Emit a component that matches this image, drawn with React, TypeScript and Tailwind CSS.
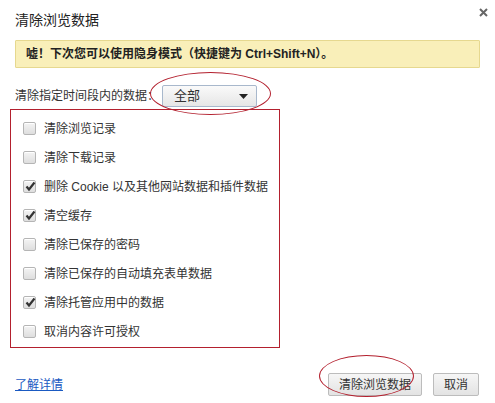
import React from "react";

const items: { label: string; checked: boolean }[] = [
  { label: "清除浏览记录", checked: false },
  { label: "清除下载记录", checked: false },
  { label: "删除 Cookie 以及其他网站数据和插件数据", checked: true },
  { label: "清空缓存", checked: true },
  { label: "清除已保存的密码", checked: false },
  { label: "清除已保存的自动填充表单数据", checked: false },
  { label: "清除托管应用中的数据", checked: true },
  { label: "取消内容许可授权", checked: false },
];

const Checkbox = ({ checked }: { checked: boolean }) => (
  <span className="relative flex h-[13px] w-[13px] shrink-0 items-center justify-center rounded-[2px] border border-[#b5b5b5] bg-gradient-to-b from-[#f4f4f4] to-[#dedede] shadow-[inset_0_1px_0_#fff]">
    {checked && (
      <svg width="11" height="11" viewBox="0 0 11 11" className="absolute left-[1px] top-[0px]">
        <path d="M1.5 5.5 L4 8.5 L9.5 1.5" fill="none" stroke="#333" strokeWidth="2.2" />
      </svg>
    )}
  </span>
);

export default function App() {
  return (
    <div
      className="relative h-[403px] w-[495px] overflow-hidden bg-white text-[12px] text-[#333]"
      style={{ fontFamily: '"Liberation Sans", Arial, "Noto Sans CJK SC", sans-serif' }}
    >
      <div className="absolute right-[7px] top-[8px]">
        <svg width="9" height="9" viewBox="0 0 9 9">
          <path d="M1 1 L8 8 M8 1 L1 8" stroke="#666" strokeWidth="2" />
        </svg>
      </div>

      <div className="px-[15px] pt-[10px]">
        <h1 className="h-[20px] text-[14px] leading-[20px] text-[#222]">清除浏览数据</h1>

        <div className="mt-[10px] flex h-[28px] items-center rounded-[1px] border border-[#e6d88f] bg-[#f9efb9] pl-[10px] font-bold text-[#222]">
          嘘！下次您可以使用隐身模式（快捷键为 Ctrl+Shift+N）。
        </div>

        <div className="mt-[17px] flex h-[22px] items-center">
          <span className="whitespace-nowrap">清除指定时间段内的数据：</span>
          <div className="ml-[3px] flex h-[22px] w-[95px] items-center justify-between rounded-[2px] border border-[#a8b8cc] bg-gradient-to-b from-[#fafafa] to-[#e6e6e6] pl-[11px] pr-[8px] text-[13px]">
            <span>全部</span>
            <svg width="9" height="5" viewBox="0 0 9 5">
              <path d="M0 0 H9 L4.5 5 Z" fill="#222" />
            </svg>
          </div>
        </div>
      </div>

      <div className="ml-[10px] mt-[2px] w-[270px] border border-[#b3202e] pb-[1px] pt-[4px]">
        {items.map((it) => (
          <div key={it.label} className="flex h-[29px] items-center whitespace-nowrap pl-[12px]">
            <Checkbox checked={it.checked} />
            <span className="ml-[8px]">{it.label}</span>
          </div>
        ))}
      </div>

      <div className="mt-[25px] flex items-center px-[15px]">
        <a href="#" className="text-[#1a5ac2] underline">了解详情</a>
        <div className="ml-auto flex gap-[11px] pr-[1px]">
          <button className="h-[23px] w-[94px] rounded-[2px] border border-[#bcbcbc] bg-gradient-to-b from-[#f6f6f6] to-[#e3e3e3] text-[12px] text-[#333]">
            清除浏览数据
          </button>
          <button className="h-[23px] w-[46px] rounded-[2px] border border-[#bcbcbc] bg-gradient-to-b from-[#f6f6f6] to-[#e3e3e3] text-[12px] text-[#333]">
            取消
          </button>
        </div>
      </div>

      <div className="pointer-events-none absolute left-[150px] top-[72px] h-[43px] w-[121px] rounded-[50%] border border-[#b3202e]" />
      <div className="pointer-events-none absolute left-[319px] top-[355px] h-[42px] w-[95px] rounded-[50%] border border-[#b3202e]" />
    </div>
  );
}
